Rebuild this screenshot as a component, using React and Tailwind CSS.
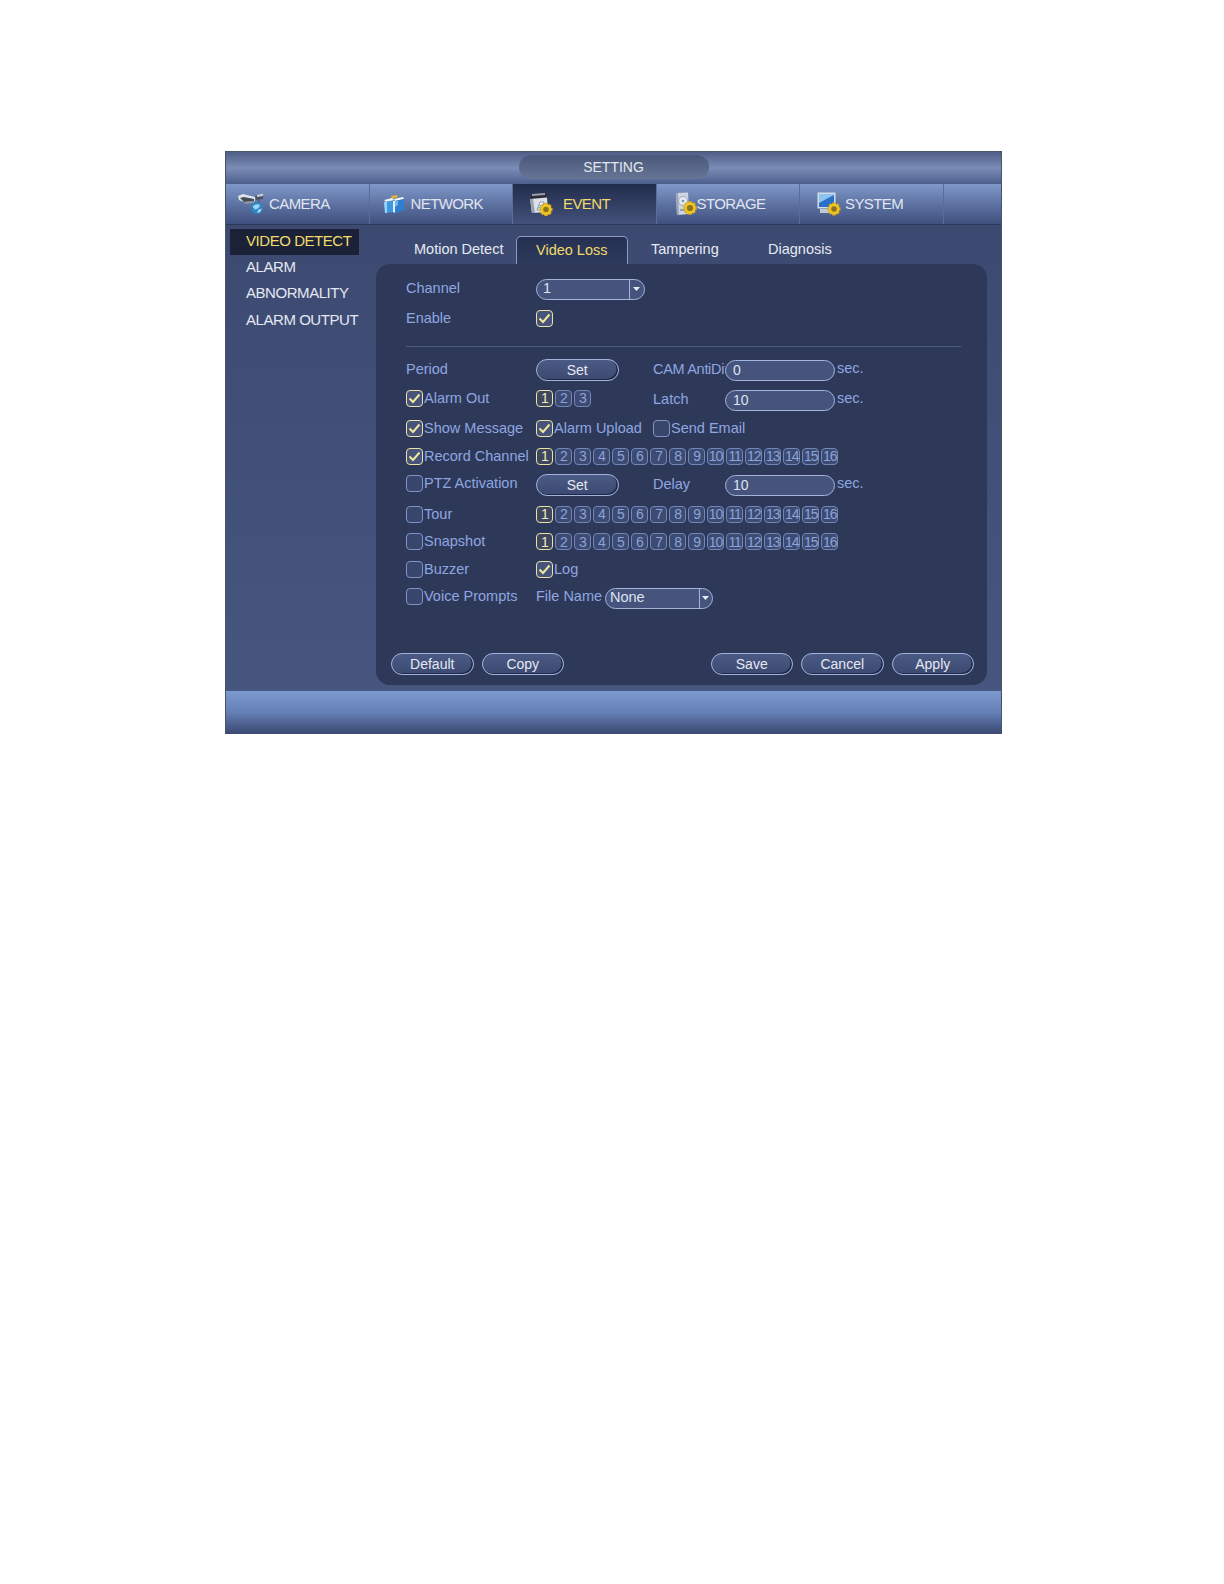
import React from "react";

const FONT = "font-['Liberation_Sans',Arial,sans-serif]";

function Gear({ x, y, r = 6 }) {
  const teeth = [0, 45, 90, 135];
  return (
    <g transform={`translate(${x} ${y})`}>
      {teeth.map((a) => (
        <rect key={a} x={-r} y={-1.7} width={r * 2} height={3.4} fill="#d8a818" transform={`rotate(${a})`} />
      ))}
      <circle r={r - 1.1} fill="#efc524" />
      <circle r={r - 3.7} fill="#8a7420" />
    </g>
  );
}

function CameraIcon() {
  return (
    <svg width="26" height="24" viewBox="0 0 26 24">
      <path d="M0 4 L5 2 L17 5 L17 9 L6 10 L1 8 Z" fill="#dfe3ea" />
      <path d="M2 6 L6 5 L16 7 L16 9 L6 10 Z" fill="#444a58" />
      <path d="M6 10 L17 9 L16 11 L7 12 Z" fill="#8f96a5" />
      <path d="M17 4 L25 2 L25 7 L18 8 Z" fill="#4a5160" />
      <path d="M19 3 L25 1.5 L25 4 L19 5 Z" fill="#c8cdd6" />
      <rect x="20" y="7" width="2" height="5" fill="#596070" />
      <circle cx="19" cy="16" r="6" fill="#2f86c4" />
      <path d="M14.5 14.5 Q18 11 22 13 Q21 17 17 17.5 Z" fill="#9ad8f4" />
      <path d="M20 18 L24 16.5 L22 20 L19.5 21 Z" fill="#b4e2f5" />
    </svg>
  );
}

function NetworkIcon() {
  return (
    <svg width="22" height="22" viewBox="0 0 22 22">
      <path d="M8 3 L14 2 L15 4 L9 6 Z" fill="#e6b23e" />
      <path d="M1 7 L9 5 L11 7 L3 9 Z" fill="#eef4fa" />
      <path d="M11 6 L20 4 L21 6 L12 8 Z" fill="#f4f8fc" />
      <path d="M1 9 L10 8 L10 19 L2 20 Z" fill="#3a9ae4" />
      <path d="M1 9 L4 9 L4 20 L2 20 Z" fill="#9fd2f5" />
      <path d="M10 8 L12 8 L12 20 L10 19 Z" fill="#e3eef8" />
      <path d="M12 8 L21 6 L21 17 L12 20 Z" fill="#2c80cf" />
      <path d="M12 8 L15 7.5 L15 12 L12 14 Z" fill="#6cb8ee" />
    </svg>
  );
}

function EventIcon() {
  return (
    <svg width="24" height="24" viewBox="0 0 24 24">
      <path d="M2 3 L17 1 L18 6 L2 7 Z" fill="#2a2d33" />
      <path d="M3 2 L16 1 L16 3 L3 4 Z" fill="#9aa1ad" />
      <path d="M1 7 L18 5.5 L19 20 L3 21 Z" fill="#dde1e7" />
      <path d="M1 7 L3 21 L6 21 L4 7 Z" fill="#9aa2ae" />
      <path d="M8 18 L11 10 L15 10 L13 18 Z" fill="#f5f7fa" stroke="#6e7787" strokeWidth="0.7" />
      <path d="M9.5 14 L13.5 13 M9 16 L13 15" stroke="#6d9bc8" strokeWidth="0.9" />
      <Gear x={17} y={17.5} r={6.5} />
    </svg>
  );
}

function StorageIcon() {
  return (
    <svg width="22" height="24" viewBox="0 0 22 24">
      <path d="M1 1 L13 0.5 L14 22 L2 23 Z" fill="#cfd6e2" />
      <path d="M1 1 L3 1 L4 23 L2 23 Z" fill="#98a4b7" />
      <circle cx="8" cy="9" r="4.5" fill="#e5e9f0" stroke="#8f9bb0" strokeWidth="0.8" />
      <circle cx="8" cy="9" r="1.3" fill="#8592a8" />
      <rect x="5" y="17" width="5" height="2" fill="#929eb2" />
      <Gear x={15} y={16} r={6.8} />
    </svg>
  );
}

function SystemIcon() {
  return (
    <svg width="24" height="24" viewBox="0 0 24 24">
      <rect x="0.5" y="0.5" width="18" height="16" fill="#d5dce7" />
      <rect x="2" y="2" width="15" height="13" fill="#2a70c8" />
      <path d="M2 11 Q9 7 17 3 L17 2 L2 2 Z" fill="#8cc4f0" />
      <path d="M3 17 L13 17 L16 21 L3 21 Z" fill="#c0c9d6" />
      <Gear x={17} y={17} r={6.5} />
    </svg>
  );
}

function Check({ checked, label }) {
  return (
    <div className="flex items-center">
      <span
        className={`flex h-[17px] w-[17px] shrink-0 items-center justify-center rounded-[4px] border-[1.5px] ${
          checked ? "border-[#e9e3a6] bg-[#47537a]" : "border-[#7f93c4] bg-[#38466c]"
        }`}
      >
        {checked && (
          <svg width="13" height="11" viewBox="0 0 13 11">
            <path d="M1.5 5.5 L5 9 L11.5 1.5" fill="none" stroke="#eee89c" strokeWidth="2" />
          </svg>
        )}
      </span>
      {label && <span className="ml-[1px] mt-[1px] whitespace-nowrap">{label}</span>}
    </div>
  );
}

function Nums({ n }) {
  return (
    <div className="flex gap-[2.35px]">
      {Array.from({ length: n }, (_, i) => (
        <span
          key={i}
          className={`flex h-[17px] w-[16.7px] items-center justify-center rounded-[4px] border-[1.5px] text-[14px] leading-none tracking-[-1px] ${
            i === 0
              ? "border-[#e9e3a6] bg-[#3f4660] text-[#f1ecb8]"
              : "border-[#7087b8] bg-[#3d4b72] text-[#8ba3d8]"
          }`}
        >
          {i + 1}
        </span>
      ))}
    </div>
  );
}

function Btn({ children }) {
  return (
    <button className="flex h-[22px] w-[82.5px] items-center justify-center rounded-full border-[1.5px] border-[#a3b4dc] bg-gradient-to-b from-[#4b5a84] to-[#3c4a72] text-[14px] text-[#e4e8f2] shadow-[inset_-1.5px_-1px_0_#1f2947]">
      {children}
    </button>
  );
}

function Input({ children }) {
  return (
    <div className="flex h-[21px] w-[110px] items-center rounded-full border-[1.5px] border-[#a4b5dc] bg-[#46547d] pl-[7px] text-[14px] text-[#dde3f2]">
      {children}
    </div>
  );
}

function Select({ children, w, size }) {
  return (
    <div className={`flex h-[21px] items-center rounded-full border-[1.5px] border-[#a4b5dc] bg-[#46547d] text-[14.5px] text-[#dde3f2] ${size}`}>
      <span className={w}>{children}</span>
      <span className="flex h-full flex-1 items-center justify-center border-l border-[#a4b5dc] pr-[2px]">
        <svg width="7" height="4" viewBox="0 0 7 4">
          <path d="M0 0 H7 L3.5 4 Z" fill="#e6ebf6" />
        </svg>
      </span>
    </div>
  );
}

function Row({ h, children }) {
  return <div className={`flex items-center ${h}`}>{children}</div>;
}

function NavTab({ icon, label, active, w, gap }) {
  return (
    <div
      className={`flex h-full w-[143.5px] items-center border-r border-[#5a6c98] ${w} ${
        active
          ? "bg-gradient-to-b from-[#222d4c] to-[#43527b] text-[#f1dc6a]"
          : "text-[#e0e5f0]"
      }`}
    >
      {icon}
      <span className={gap}>{label}</span>
    </div>
  );
}

export default function App() {
  return (
    <div className={`h-[1584px] w-[1224px] bg-white pl-[225px] pt-[151px] ${FONT}`}>
      <div className="flex h-[583px] w-[777px] flex-col border-x border-t border-[#4a5468] bg-[#45547e]">
        {/* title */}
        <div className="flex h-[32px] shrink-0 justify-center bg-gradient-to-b from-[#4f5e86] via-[#7b8db6] to-[#4d5e8c] pt-[3px]">
          <div className="flex h-[24px] w-[190px] items-center justify-center rounded-full bg-gradient-to-b from-[#4a5778] to-[#667596] text-[14px] text-[#e4e7ef]">
            SETTING
          </div>
        </div>
        {/* nav */}
        <div className="flex h-[41px] shrink-0 border-b border-[#2c3858] bg-gradient-to-b from-[#7f98c9] to-[#3f507e] text-[15px] tracking-[-0.6px]">
          <NavTab w="pl-[12px]" gap="ml-[5px]" icon={<CameraIcon />} label="CAMERA" />
          <NavTab w="pl-[13px]" gap="ml-[6px]" icon={<NetworkIcon />} label="NETWORK" />
          <NavTab w="pl-[16px]" gap="ml-[10px]" active icon={<EventIcon />} label="EVENT" />
          <NavTab w="pl-[18px]" icon={<StorageIcon />} label="STORAGE" />
          <NavTab w="pl-[17px]" gap="ml-[4px]" icon={<SystemIcon />} label="SYSTEM" />
        </div>
        {/* body */}
        <div className="flex min-h-0 flex-1 bg-gradient-to-b from-[#3c4a72] to-[#47567f]">
          <div className="w-[150px] shrink-0 pl-[4px] pt-[4px] text-[15px] tracking-[-0.45px] text-[#e4e8f2]">
            <div className="flex h-[26px] w-[129px] items-center bg-[#1b2238] pb-[2px] pl-[16px] text-[#f1dc6a]">VIDEO DETECT</div>
            <div className="flex h-[26px] items-center pb-[2px] pl-[16px]">ALARM</div>
            <div className="flex h-[27px] items-center pb-[2px] pl-[16px]">ABNORMALITY</div>
            <div className="flex h-[26px] items-center pb-[2px] pl-[16px]">ALARM OUTPUT</div>
          </div>
          <div className="flex w-[611px] flex-col">
            {/* sub tabs */}
            <div className="flex h-[39px] shrink-0 items-end text-[14.5px] text-[#e6eaf4]">
              <span className="ml-[38px] flex h-[28px] w-[102px] items-center">Motion Detect</span>
              <span className="flex h-[28px] w-[111.5px] items-center justify-center rounded-t-[5px] border-x border-t border-[#8a9ac4] bg-gradient-to-b from-[#253052] to-[#2e3a5c] text-[#f1dc6a]">
                Video Loss
              </span>
              <span className="ml-[23.5px] flex h-[28px] w-[117px] items-center">Tampering</span>
              <span className="flex h-[28px] items-center">Diagnosis</span>
            </div>
            {/* panel */}
            <div className="flex h-[421px] w-[611px] flex-col rounded-[14px] bg-[#2e395a] pt-[9px] text-[14.5px] text-[#8ea6e0]">
              <div className="pl-[30px]">
                <Row h="h-[28px]">
                  <span className="mt-[4px] w-[130px]">Channel</span>
                  <div className="mt-[4px]"><Select size="w-[109px]" w="w-[92px] pl-[6px]">1</Select></div>
                </Row>
                <Row h="h-[34px]">
                  <span className="mt-[2px] w-[130px]">Enable</span>
                  <Check checked />
                </Row>
                <div className="mt-[11px] mb-[6px] h-px w-[555px] bg-[#4d5a80]" />
                <Row h="h-[30px]">
                  <span className="mt-[4px] w-[130px]">Period</span>
                  <div className="mt-[4px] w-[117px]"><Btn>Set</Btn></div>
                  <span className="mt-[4px] w-[72px] overflow-hidden whitespace-nowrap tracking-[-0.3px]">CAM AntiDither</span>
                  <div className="mt-[4px]"><Input>0</Input></div>
                  <span className="mt-[2px] ml-[2px]">sec.</span>
                </Row>
                <Row h="h-[30px]">
                  <div className="w-[130px]"><Check checked label="Alarm Out" /></div>
                  <div className="w-[117px]"><Nums n={3} /></div>
                  <span className="mt-[3px] w-[72px]">Latch</span>
                  <div className="mt-[4px]"><Input>10</Input></div>
                  <span className="mt-[2px] ml-[2px]">sec.</span>
                </Row>
                <Row h="h-[31px]">
                  <div className="w-[130px]"><Check checked label="Show Message" /></div>
                  <div className="w-[117px]"><Check checked label="Alarm Upload" /></div>
                  <Check label="Send Email" />
                </Row>
                <Row h="h-[24px]">
                  <div className="w-[130px]"><Check checked label="Record Channel" /></div>
                  <Nums n={16} />
                </Row>
                <Row h="h-[30px]">
                  <div className="w-[130px]"><Check label="PTZ Activation" /></div>
                  <div className="mt-[4px] w-[117px]"><Btn>Set</Btn></div>
                  <span className="mt-[3px] w-[72px]">Delay</span>
                  <div className="mt-[4px]"><Input>10</Input></div>
                  <span className="mt-[2px] ml-[2px]">sec.</span>
                </Row>
                <Row h="h-[32px]">
                  <div className="w-[130px]"><Check label="Tour" /></div>
                  <Nums n={16} />
                </Row>
                <Row h="h-[23px]">
                  <div className="w-[130px]"><Check label="Snapshot" /></div>
                  <Nums n={16} />
                </Row>
                <Row h="h-[32px]">
                  <div className="w-[130px]"><Check label="Buzzer" /></div>
                  <Check checked label="Log" />
                </Row>
                <Row h="h-[22px]">
                  <div className="w-[130px]"><Check label="Voice Prompts" /></div>
                  <span className="mt-[2px] w-[69px] whitespace-nowrap">File Name</span>
                  <div className="mt-[4px]"><Select size="w-[108px]" w="w-[93px] pl-[4px]">None</Select></div>
                </Row>
              </div>
              <div className="mt-[46px] flex justify-between pl-[15px] pr-[13px]">
                <div className="flex gap-[8px]">
                  <Btn>Default</Btn>
                  <Btn>Copy</Btn>
                </div>
                <div className="flex gap-[8px]">
                  <Btn>Save</Btn>
                  <Btn>Cancel</Btn>
                  <Btn>Apply</Btn>
                </div>
              </div>
            </div>
          </div>
        </div>
        {/* footer */}
        <div className="h-[43px] shrink-0 bg-gradient-to-b from-[#7d9ace] via-[#6480b5] to-[#3a4872]" />
      </div>
    </div>
  );
}
